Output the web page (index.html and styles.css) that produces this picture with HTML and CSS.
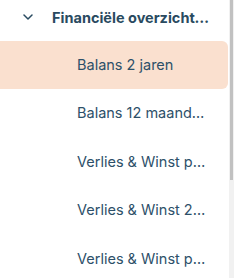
FILE: index.html
```html
<!DOCTYPE html>
<html lang="nl">
  <head>
    <meta charset="UTF-8" />
    <meta name="viewport" content="width=device-width, initial-scale=1.0" />
    <title>Financiële overzichten</title>
    <link rel="stylesheet" href="styles.css">
  </head>
  <body>
    <div class="sidebar">
      <nav class="menu">
        <div class="group-head">
          <svg class="chevron" width="10" height="6" viewBox="0 0 10 6"><path d="M1 1l4 4 4-4" fill="none" stroke="#294a60" stroke-width="1.5" stroke-linecap="round" stroke-linejoin="round"/></svg>
          <span class="group-title">Financiële overzichten</span>
        </div>
        <a class="menu-item active">Balans 2 jaren</a>
        <a class="menu-item">Balans 12 maanden</a>
        <a class="menu-item">Verlies &amp; Winst per maand</a>
        <a class="menu-item">Verlies &amp; Winst 2 jaren</a>
        <a class="menu-item">Verlies &amp; Winst per kwartaal</a>
      </nav>
      <div class="scrollbar"><div class="thumb"></div></div>
    </div>
  </body>
</html>
```

FILE: styles.css
```css
body{
  margin: 0;
  font-family: Inter, "Noto Sans", sans-serif;
  background-color: white;
  color: #2d5069;
}
.sidebar{
  display: flex;
  width: 234px;
  height: 278px;
  overflow: hidden;
}
.menu{
  flex: 1;
  min-width: 0;
  display: flex;
  flex-direction: column;
  padding-top: 3px;
  overflow: hidden;
}
.group-head{
  display: flex;
  flex-shrink: 0;
  align-items: center;
  height: 28px;
  padding-left: 23px;
  margin-bottom: 10px;
  color: #294a60;
}
.chevron{
  margin-right: 19px;
  flex-shrink: 0;
}
.group-title{
  font-size: 14.5px;
  font-weight: 700;
  white-space: nowrap;
  overflow: hidden;
  text-overflow: ellipsis;
  width: 158px;
}
.menu-item{
  display: block;
  flex-shrink: 0;
  height: 48.5px;
  line-height: 48px;
  padding-left: 77px;
  padding-right: 20px;
  font-size: 14.5px;
  white-space: nowrap;
  overflow: hidden;
  text-overflow: ellipsis;
  border-radius: 0 6px 6px 0;
  margin-right: 1px;
}
.menu-item.active{
  background-color: #fae0cf;
  height: 48px;
}
.scrollbar{
  width: 5px;
  flex-shrink: 0;
  background-color: #f1f1f1;
  display: flex;
  justify-content: center;
}
.thumb{
  width: 3px;
  height: 180px;
  background-color: #c1c1c1;
}
```
